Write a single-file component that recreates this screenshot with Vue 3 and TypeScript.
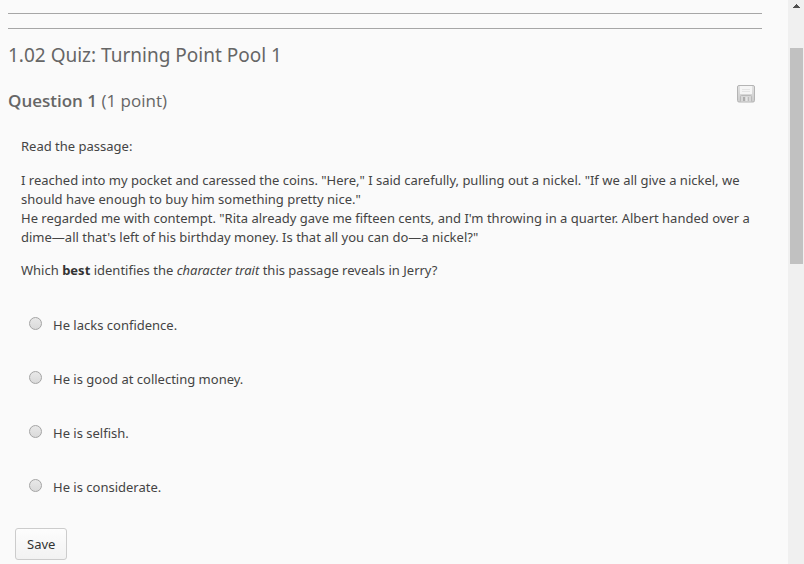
<script setup lang="ts">
import { ref } from 'vue'

interface Choice {
  id: string
  label: string
}

const choices: Choice[] = [
  { id: 'confidence', label: 'He lacks confidence.' },
  { id: 'money', label: 'He is good at collecting money.' },
  { id: 'selfish', label: 'He is selfish.' },
  { id: 'considerate', label: 'He is considerate.' },
]

const selected = ref<string>('')
</script>

<template>
  <div class="page">
    <main class="quiz">
      <hr class="rule" />
      <hr class="rule" />
      <h1 class="title">1.02 Quiz: Turning Point Pool 1</h1>
      <form @submit.prevent>
        <header class="question-head">
          <h2 class="question-title"><strong>Question 1</strong> (1 point)</h2>
          <svg class="disk" width="18" height="18" viewBox="0 0 18 18" aria-hidden="true">
            <defs>
              <linearGradient id="disk-body" x1="0" y1="0" x2="0" y2="1">
                <stop offset="0" stop-color="#e2e2e2" />
                <stop offset="1" stop-color="#cccccc" />
              </linearGradient>
            </defs>
            <rect x="0.5" y="0.5" width="17" height="16.5" rx="1.5" fill="url(#disk-body)" stroke="#b4b4b4" />
            <rect x="3" y="1" width="12" height="8" fill="#f5f5f5" />
            <path d="M5 4.5h8M5 6.5h8" stroke="#e4e4e4" />
            <path d="M3.5 16.5v-5q0-1 1-1h9q1 0 1 1v5" fill="#d8d8d8" stroke="#bababa" />
            <rect x="6" y="12" width="2" height="4" fill="#adadad" />
            <path d="M9.5 12v4" stroke="#e6e6e6" />
            <path d="M11.5 12v4" stroke="#bcbcbc" />
          </svg>
        </header>
        <div class="passage">
          <p>Read the passage:</p>
          <p>
            I reached into my pocket and caressed the coins. "Here," I said carefully, pulling out a nickel. "If we all give a nickel, we should have enough to buy him something pretty nice."<br />
            He regarded me with contempt. "Rita already gave me fifteen cents, and I'm throwing in a quarter. Albert handed over a dime—all that's left of his birthday money. Is that all you can do—a nickel?"
          </p>
          <p>Which <strong>best</strong> identifies the <em>character trait</em> this passage reveals in Jerry?</p>
        </div>
        <div class="choices" role="radiogroup" aria-label="Question 1">
          <div v-for="choice in choices" :key="choice.id" class="choice">
            <input :id="choice.id" v-model="selected" type="radio" name="answer" :value="choice.id" />
            <label :for="choice.id">{{ choice.label }}</label>
          </div>
        </div>
        <button class="save" type="submit">Save</button>
      </form>
    </main>
    <div class="scrollbar" aria-hidden="true">
      <svg class="arrow" width="7" height="4" viewBox="0 0 7 4">
        <path d="M3 0h1v1h1v1h1v1h1v1H0V3h1V2h1V1h1z" fill="#505050" />
      </svg>
      <div class="thumb"></div>
    </div>
  </div>
</template>

<style>
body {
  margin: 0;
  background: #fafafa;
}
</style>

<style scoped>
.page {
  display: flex;
  min-height: 100vh;
  background: #fafafa;
  color: #444;
  font: 13px/19px "Noto Sans", "Open Sans", sans-serif;
}

.quiz {
  flex: 1;
  min-width: 0;
  padding: 13px 26px 4px 8px;
  box-sizing: border-box;
}

.rule {
  height: 1px;
  margin: 0 0 14px;
  border: 0;
  background: #a6a6a6;
}

.title {
  margin: 0;
  color: #666;
  font-size: 19px;
  font-weight: 400;
  line-height: 24px;
}

.question-head {
  display: flex;
  align-items: flex-start;
  justify-content: space-between;
  margin-top: 18px;
  padding-right: 7px;
}

.question-title {
  margin: 4px 0 0;
  color: #666;
  font-family: "Open Sans", sans-serif;
  font-size: 17px;
  font-weight: 400;
  line-height: 24px;
}

.question-title strong {
  font-weight: 600;
}

.disk {
  flex: none;
}

.passage {
  padding: 24px 0 0 13px;
}

.passage p {
  margin: 0 0 15px;
}

.passage p + p + p {
  margin-top: -1px;
}

.passage strong {
  color: #333;
}

.choices {
  display: grid;
  gap: 35px;
  margin-top: 36px;
  padding-left: 21px;
}

.choice {
  display: flex;
  align-items: flex-start;
  gap: 11px;
}

.choice input {
  appearance: none;
  flex: none;
  width: 13px;
  height: 13px;
  margin: 1px 0 0;
  border: 1px solid #a4a4a4;
  border-radius: 50%;
  background: linear-gradient(#e8e8e8, #dadada);
}

.choice input:checked {
  background: radial-gradient(#555 3px, #e2e2e2 4px);
}

.save {
  display: block;
  height: 32px;
  margin: 31px 0 0 7px;
  padding: 0 11px;
  border: 1px solid #ccc;
  border-radius: 3px;
  background: linear-gradient(#fdfdfd, #f2f2f2);
  color: #333;
  font: inherit;
}

.scrollbar {
  display: flex;
  flex: none;
  flex-direction: column;
  align-items: center;
  gap: 40px;
  width: 16px;
  padding-top: 4px;
  box-sizing: border-box;
  background: #f0f0f0;
}

.thumb {
  width: 13px;
  height: 216px;
  background: #c1c1c1;
}
</style>
